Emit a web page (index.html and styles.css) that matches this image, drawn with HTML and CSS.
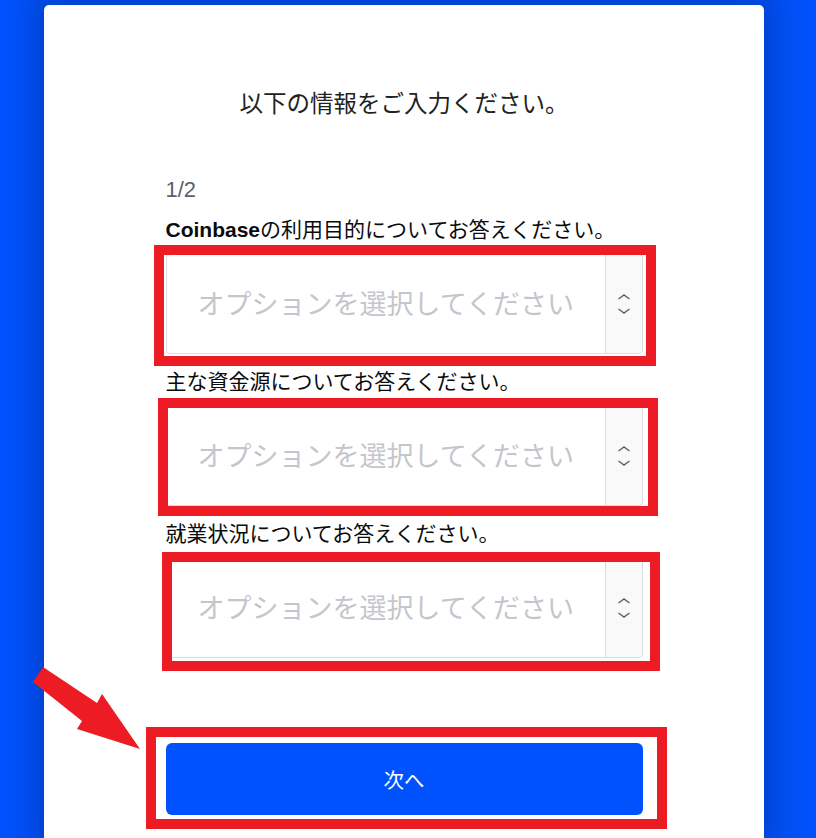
FILE: index.html
```html
<!DOCTYPE html>
<html lang="ja">
<head>
    <meta charset="UTF-8">
    <meta name="viewport" content="width=device-width, initial-scale=1.0">
    <title>Coinbase - 情報の入力</title>
    <link rel="stylesheet" href="styles.css">
</head>
<body>
    <div id="card">
        <h1>以下の情報をご入力ください。</h1>
        <div id="form">
            <div class="step">1/2</div>

            <div class="field">
                <div class="label"><strong>Coinbase</strong>の利用目的についてお答えください。</div>
                <div class="select">
                    <span class="placeholder">オプションを選択してください</span>
                    <span class="addon">
                        <svg width="14" height="20" viewBox="0 0 14 20"><path d="M1.5 5 L7 1 L12.5 5 M1.5 15 L7 19 L12.5 15" fill="none" stroke="#5b616e" stroke-width="1.5"/></svg>
                    </span>
                    <div class="mark mark-1"></div>
                </div>
            </div>

            <div class="field">
                <div class="label">主な資金源についてお答えください。</div>
                <div class="select">
                    <span class="placeholder">オプションを選択してください</span>
                    <span class="addon">
                        <svg width="14" height="20" viewBox="0 0 14 20"><path d="M1.5 5 L7 1 L12.5 5 M1.5 15 L7 19 L12.5 15" fill="none" stroke="#5b616e" stroke-width="1.5"/></svg>
                    </span>
                    <div class="mark mark-2"></div>
                </div>
            </div>

            <div class="field">
                <div class="label">就業状況についてお答えください。</div>
                <div class="select">
                    <span class="placeholder">オプションを選択してください</span>
                    <span class="addon">
                        <svg width="14" height="20" viewBox="0 0 14 20"><path d="M1.5 5 L7 1 L12.5 5 M1.5 15 L7 19 L12.5 15" fill="none" stroke="#5b616e" stroke-width="1.5"/></svg>
                    </span>
                    <div class="mark mark-3"></div>
                </div>
            </div>

            <button id="next-button">次へ<span class="mark mark-btn"></span></button>
        </div>
    </div>

    <!-- red annotation arrow -->
    <svg id="arrow" width="115" height="95" viewBox="0 0 115 95">
        <polygon points="13,7 67,43 72,34 110,89 47,69 52,61 3,22" fill="#ed1c24"/>
    </svg>
</body>
</html>
```

FILE: styles.css
```css
body {
    margin: 0;
    height: 838px;
    overflow: hidden;
    position: relative;
    background: linear-gradient(90deg, #0052ff 0%, #004ce8 5%, #004de9 94%, #0052ff 100%);
    font-family: "Liberation Sans", "Noto Sans CJK JP", sans-serif;
    color: #0a0b0d;
}
#card {
    width: 720px;
    height: 833px;
    margin: 5px 0 0 44px;
    padding-top: 84px;
    box-sizing: border-box;
    background-color: #ffffff;
    border-radius: 5px 5px 0 0;
    box-shadow: 0 0 24px rgba(0, 30, 120, 0.35);
}
h1 {
    margin: 0;
    font-size: 23.5px;
    font-weight: normal;
    line-height: 30px;
    text-align: center;
    color: #222222;
}
#form {
    width: 477px;
    margin: 58px auto 0;
}
.step {
    font-size: 22px;
    line-height: 26px;
    color: #5b616e;
    margin-bottom: 14px;
}
.field {
    margin-bottom: 15px;
}
.label {
    font-size: 21px;
    line-height: 26px;
    margin-bottom: 11px;
    white-space: nowrap;
}
.label strong {
    font-weight: bold;
}
.select {
    position: relative;
    display: flex;
    height: 100px;
    border: 1px solid #dcdde0;
    border-radius: 4px;
    box-sizing: border-box;
}
.placeholder {
    flex: 1;
    display: flex;
    align-items: center;
    padding-left: 31px;
    padding-bottom: 3px;
    font-size: 27px;
    color: #c4c6cc;
    white-space: nowrap;
}
.addon {
    width: 36px;
    display: flex;
    align-items: center;
    justify-content: center;
    background-color: #f9f9fa;
    border-left: 1px solid #dcdde0;
    border-radius: 0 4px 4px 0;
}
.mark {
    position: absolute;
    border: 10px solid #ed1c24;
}
.mark-1 {
    top: -10px;
    left: -13px;
    right: -14px;
    bottom: -13px;
}
.mark-2 {
    top: -9px;
    left: -9px;
    right: -16px;
    bottom: -11px;
}
.mark-3 {
    top: -7px;
    left: -5px;
    right: -18px;
    bottom: -14px;
}
#next-button {
    position: relative;
    display: block;
    width: 100%;
    height: 72px;
    margin-top: 85px;
    border: none;
    border-radius: 6px;
    background-color: #0052ff;
    color: #ffffff;
    font-family: "Liberation Sans", "Noto Sans CJK JP", sans-serif;
    font-size: 20.5px;
}
.mark-btn {
    top: -16px;
    left: -20px;
    right: -24px;
    bottom: -14px;
}
#arrow {
    position: absolute;
    left: 30px;
    top: 660px;
}
```
